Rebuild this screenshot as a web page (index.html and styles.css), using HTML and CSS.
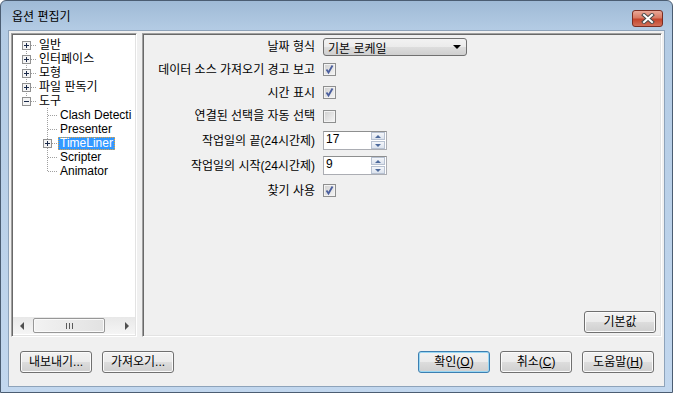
FILE: index.html
```html
<!DOCTYPE html>
<html lang="ko">
<head>
  <meta charset="UTF-8">
  <title>옵션 편집기</title>
  <link rel="stylesheet" href="styles.css">
</head>
<body>
  <div class="window">
    <div class="titlebar">
      <span class="title">옵션 편집기</span>
      <span class="close">
        <svg width="14" height="11" viewBox="0 0 14 11"><path d="M3 2 L11 9 M11 2 L3 9" stroke="#4a4a4a" stroke-width="4" stroke-linecap="square"/><path d="M3 2 L11 9 M11 2 L3 9" stroke="#fff" stroke-width="2" stroke-linecap="square"/></svg>
      </span>
    </div>

    <div class="client">
      <div class="main">
        <!-- 왼쪽 트리 -->
        <div class="tree">
          <ul class="root">
            <li><div class="row"><span class="twisty"><svg width="9" height="9"><rect x=".5" y=".5" width="8" height="8" fill="#f4f4f4" stroke="#919191"/><path d="M2 4.5h5M4.5 2v5" stroke="#1b2a4a"/></svg></span><span class="dots"></span><span class="label">일반</span></div></li>
            <li><div class="row"><span class="twisty"><svg width="9" height="9"><rect x=".5" y=".5" width="8" height="8" fill="#f4f4f4" stroke="#919191"/><path d="M2 4.5h5M4.5 2v5" stroke="#1b2a4a"/></svg></span><span class="dots"></span><span class="label">인터페이스</span></div></li>
            <li><div class="row"><span class="twisty"><svg width="9" height="9"><rect x=".5" y=".5" width="8" height="8" fill="#f4f4f4" stroke="#919191"/><path d="M2 4.5h5M4.5 2v5" stroke="#1b2a4a"/></svg></span><span class="dots"></span><span class="label">모형</span></div></li>
            <li><div class="row"><span class="twisty"><svg width="9" height="9"><rect x=".5" y=".5" width="8" height="8" fill="#f4f4f4" stroke="#919191"/><path d="M2 4.5h5M4.5 2v5" stroke="#1b2a4a"/></svg></span><span class="dots"></span><span class="label">파일 판독기</span></div></li>
            <li>
              <div class="row"><span class="twisty"><svg width="9" height="9"><rect x=".5" y=".5" width="8" height="8" fill="#f4f4f4" stroke="#919191"/><path d="M2 4.5h5" stroke="#1b2a4a"/></svg></span><span class="dots"></span><span class="label">도구</span></div>
              <ul class="children">
                <li><div class="row"><span class="twisty leaf"></span><span class="dots"></span><span class="label">Clash Detecti</span></div></li>
                <li><div class="row"><span class="twisty leaf"></span><span class="dots"></span><span class="label">Presenter</span></div></li>
                <li><div class="row"><span class="twisty"><svg width="9" height="9"><rect x=".5" y=".5" width="8" height="8" fill="#f4f4f4" stroke="#919191"/><path d="M2 4.5h5M4.5 2v5" stroke="#1b2a4a"/></svg></span><span class="dots"></span><span class="label selected">TimeLiner</span></div></li>
                <li><div class="row"><span class="twisty leaf"></span><span class="dots"></span><span class="label">Scripter</span></div></li>
                <li><div class="row"><span class="twisty leaf"></span><span class="dots"></span><span class="label">Animator</span></div></li>
              </ul>
            </li>
          </ul>

          <div class="hscroll">
            <span class="sbtn"><span class="arr-left"></span></span>
            <span class="thumb"><svg width="7" height="6"><path d="M.5 0v6M3.5 0v6M6.5 0v6" stroke="#5a5a5a"/></svg></span>
            <span class="track"></span>
            <span class="sbtn"><span class="arr-right"></span></span>
          </div>
        </div>

        <!-- 오른쪽 옵션 -->
        <div class="panel">
          <div class="form">
            <span class="lbl">날짜 형식</span>
            <span class="combo"><span>기본 로케일</span><span class="caret"></span></span>

            <span class="lbl">데이터 소스 가져오기 경고 보고</span>
            <span class="check on"><svg width="11" height="11"><path d="M2.5 5.5 L4.5 8.5 L8.5 1.5" fill="none" stroke="#4b5f9e" stroke-width="1.8"/></svg></span>

            <span class="lbl">시간 표시</span>
            <span class="check on"><svg width="11" height="11"><path d="M2.5 5.5 L4.5 8.5 L8.5 1.5" fill="none" stroke="#4b5f9e" stroke-width="1.8"/></svg></span>

            <span class="lbl">연결된 선택을 자동 선택</span>
            <span class="check"></span>

            <span class="lbl">작업일의 끝(24시간제)</span>
            <span class="spin"><span class="val">17</span><span class="spinbtns"><span class="sb"><span class="up"></span></span><span class="sb"><span class="down"></span></span></span></span>

            <span class="lbl">작업일의 시작(24시간제)</span>
            <span class="spin"><span class="val">9</span><span class="spinbtns"><span class="sb"><span class="up"></span></span><span class="sb"><span class="down"></span></span></span></span>

            <span class="lbl">찾기 사용</span>
            <span class="check on"><svg width="11" height="11"><path d="M2.5 5.5 L4.5 8.5 L8.5 1.5" fill="none" stroke="#4b5f9e" stroke-width="1.8"/></svg></span>
          </div>
          <button class="btn reset">기본값</button>
        </div>
      </div>

      <div class="footer">
        <div class="group">
          <button class="btn">내보내기...</button>
          <button class="btn">가져오기...</button>
        </div>
        <div class="group">
          <button class="btn default">확인(<u>O</u>)</button>
          <button class="btn">취소(<u>C</u>)</button>
          <button class="btn">도움말(<u>H</u>)</button>
        </div>
      </div>
    </div>
  </div>
</body>
</html>
```

FILE: styles.css
```css
body {
  margin:0;
  padding:0;
  font-family:"Liberation Sans", "Noto Sans CJK KR", sans-serif;
  font-size:12px;
  color:#000;
}

.window {
  width:673px;
  height:393px;
  box-sizing:border-box;
  border:1px solid #4b5d72;
  border-radius:6px 6px 0 0;
  background:linear-gradient(to bottom, #9fbad6 0px, #b3cbe4 28px, #c2d7ee 100%);
  display:flex;
  flex-direction:column;
}

/* 타이틀바 */
.titlebar {
  height:29px;
  display:flex;
  align-items:flex-start;
  justify-content:space-between;
  padding:0 9px 0 11px;
  box-sizing:border-box;
}
.title {
  margin-top:9px;
  font-size:12px;
  line-height:14px;
}
.close {
  margin-top:9px;
  width:31px;
  height:17px;
  box-sizing:border-box;
  border:1px solid #7a2d22;
  border-radius:3px;
  background:linear-gradient(to bottom, #e9a898 0%, #d87a64 45%, #c4442c 55%, #d2705a 100%);
  display:flex;
  align-items:center;
  justify-content:center;
}

/* 본문 */
.client {
  margin:0 7px 5px 7px;
  flex:1;
  background:#f0f0f0;
  border:1px solid #8ea3ba;
  padding:2px 2px 0 2px;
  display:flex;
  flex-direction:column;
}
.main {
  height:304px;
  display:flex;
  gap:5px;
}

/* 트리 */
.tree {
  width:126px;
  box-sizing:border-box;
  background:#fff;
  border:1px solid;
  border-color:#a0a0a0 #fff #fff #a0a0a0;
  box-shadow:inset 1px 1px 0 #696969, inset -1px -1px 0 #e3e3e3;
  display:flex;
  flex-direction:column;
  padding:4px 1px 2px 1px;
  overflow:hidden;
}
.tree ul {
  list-style:none;
  margin:0;
  padding:0;
}
.root {
  margin-left:9px !important;
  background-image:repeating-linear-gradient(to bottom, #a0a0a0 0 1px, transparent 1px 2px);
  background-repeat:no-repeat;
  background-position:4px 7px;
  background-size:1px 56px;
}
.children {
  margin-left:21px !important;
  background-image:repeating-linear-gradient(to bottom, #a0a0a0 0 1px, transparent 1px 2px);
  background-repeat:no-repeat;
  background-position:4px 0;
  background-size:1px 63px;
}
.row {
  height:14px;
  display:flex;
  align-items:center;
  white-space:nowrap;
}
.twisty {
  width:9px;
  height:9px;
  flex:none;
  display:flex;
}
.twisty.leaf {
  background-image:repeating-linear-gradient(to right, #a0a0a0 0 1px, transparent 1px 2px);
  background-repeat:no-repeat;
  background-position:5px 4px;
  background-size:4px 1px;
}
.dots {
  width:6px;
  height:1px;
  flex:none;
  background:repeating-linear-gradient(to right, #a0a0a0 0 1px, transparent 1px 2px);
}
.label {
  padding:0 2px;
  line-height:13px;
}
.label.selected {
  background:#3399ff;
  color:#fff;
  outline:1px dotted #e8a23a;
  outline-offset:-1px;
}

.hscroll {
  margin-top:auto;
  height:17px;
  display:flex;
  align-items:center;
  background:linear-gradient(to bottom, #e8e8e8, #f5f5f5);
}
.sbtn {
  width:17px;
  height:17px;
  display:flex;
  align-items:center;
  justify-content:center;
}
.arr-left {
  width:0;
  height:0;
  border-top:4px solid transparent;
  border-bottom:4px solid transparent;
  border-right:4px solid #505050;
}
.arr-right {
  width:0;
  height:0;
  border-top:4px solid transparent;
  border-bottom:4px solid transparent;
  border-left:4px solid #505050;
}
.thumb {
  margin-left:3px;
  width:72px;
  height:15px;
  box-sizing:border-box;
  border:1px solid #979797;
  border-radius:2px;
  background:linear-gradient(to right, #f2f2f2, #e2e2e2);
  box-shadow:inset 0 0 0 1px #fafafa;
  display:flex;
  align-items:center;
  justify-content:center;
}
.track {
  flex:1;
}

/* 오른쪽 패널 */
.panel {
  flex:1;
  box-sizing:border-box;
  border:1px solid;
  border-color:#a0a0a0 #fff #fff #a0a0a0;
  box-shadow:inset 1px 1px 0 #696969, inset -1px -1px 0 #e3e3e3;
  display:flex;
  flex-direction:column;
}
.form {
  display:grid;
  grid-template-columns:172px auto;
  grid-template-rows:22px 23px 23px 24px 25px 25px 25px;
  column-gap:8px;
  align-items:center;
  justify-items:start;
  padding-top:2px;
}
.lbl {
  justify-self:end;
  white-space:nowrap;
  line-height:14px;
}

.combo {
  width:144px;
  height:18px;
  box-sizing:border-box;
  border:1px solid #707070;
  border-radius:3px;
  background:linear-gradient(to bottom, #f2f2f2 0%, #ebebeb 50%, #dddddd 51%, #cfcfcf 100%);
  display:flex;
  align-items:center;
  justify-content:space-between;
  padding:0 5px 0 4px;
}
.caret {
  width:0;
  height:0;
  border-left:4px solid transparent;
  border-right:4px solid transparent;
  border-top:4px solid #000;
}

.check {
  width:13px;
  height:13px;
  box-sizing:border-box;
  border:1px solid #8e8f8f;
  background:linear-gradient(135deg, #cfcfcf, #f6f6f6);
  box-shadow:inset 0 0 0 1px #f3f3f3;
  display:flex;
  align-items:center;
  justify-content:center;
}

.spin {
  width:64px;
  height:19px;
  box-sizing:border-box;
  border:1px solid #abadb3;
  border-top-color:#8e8f8f;
  background:#fff;
  display:flex;
  justify-content:space-between;
}
.val {
  padding-left:2px;
  line-height:14px;
}
.spinbtns {
  display:flex;
  flex-direction:column;
  gap:1px;
  padding:0 1px 0 0;
}
.sb {
  width:14px;
  height:8px;
  box-sizing:border-box;
  border:1px solid #b7c1d1;
  background:linear-gradient(to bottom, #f4f6fa, #dce3ee);
  display:flex;
  align-items:center;
  justify-content:center;
}
.up {
  width:0;
  height:0;
  border-left:3px solid transparent;
  border-right:3px solid transparent;
  border-bottom:3px solid #4d6a9c;
}
.down {
  width:0;
  height:0;
  border-left:3px solid transparent;
  border-right:3px solid transparent;
  border-top:3px solid #4d6a9c;
}

/* 버튼 */
.btn {
  width:72px;
  height:22px;
  box-sizing:border-box;
  border:1px solid #707070;
  border-radius:3px;
  background:linear-gradient(to bottom, #f2f2f2 0%, #ebebeb 50%, #dddddd 51%, #cfcfcf 100%);
  box-shadow:inset 0 0 0 1px #fbfbfb;
  font-family:"Liberation Sans", "Noto Sans CJK KR", sans-serif;
  font-size:12px;
  color:#000;
  padding:0;
  line-height:14px;
}
.btn.default {
  border-color:#3c7fb1;
  box-shadow:inset 0 0 0 1px #9ad7f3;
}
.reset {
  margin:auto 5px 3px auto;
}

.footer {
  display:flex;
  justify-content:space-between;
  padding:14px 8px 0 9px;
}
.group {
  display:flex;
  gap:10px;
}
```
